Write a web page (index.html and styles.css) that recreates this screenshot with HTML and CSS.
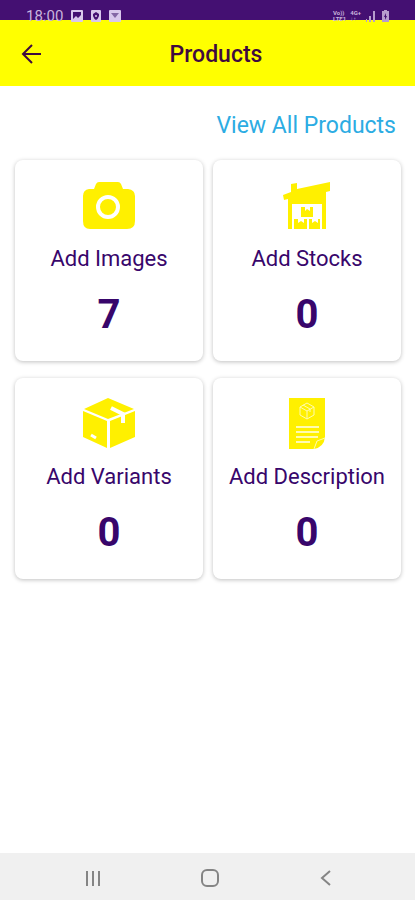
FILE: index.html
```html
<!DOCTYPE html>
<html lang="en">

<head>
    <meta charset="UTF-8">
    <meta name="viewport" content="width=device-width, initial-scale=1.0">
    <title>Products</title>
    <link rel="stylesheet" href="styles.css">
</head>

<body>
    <div class="status-bar">
        <span class="time">18:00</span>
        <svg width="50" height="12" viewBox="0 0 50 12" aria-hidden="true">
            <path fill="#d9c8ec" fill-rule="evenodd" d="M1 0h10q1 0 1 1v10q0 1-1 1H1q-1 0-1-1V1q0-1 1-1zM2 2v7l3-3 2 2 3-3V2z" />
            <path fill="#d9c8ec" fill-rule="evenodd" d="M21 0h8q1 0 1 1v10q0 1-1 1h-8q-1 0-1-1V1q0-1 1-1zM25 2l-3 2v2q1 3 3 4 2-1 3-4V4z" />
            <circle cx="25" cy="6" r="1" fill="#d9c8ec" />
            <rect x="38" width="12" height="12" rx="1" fill="#d9c8ec" />
            <path d="M40 3h8l-4 5z" fill="#8467a5" />
        </svg>
        <div class="signal">
            <span class="volte">Vo))<br>LTE1</span>
            <span class="volte">4G+<br>↓↑</span>
            <svg width="26" height="12" viewBox="0 0 26 12" fill="#b79dce" aria-hidden="true">
                <path d="M1 9h1v3H1zM4 6h2v6H4zM8 1h2v11H8z" />
                <path d="M17 1h2V0h3v1h2v11h-7z" />
                <path d="M21 3l-2 4h1v3l2-4h-1z" fill="#441072" />
            </svg>
        </div>
    </div>

    <header class="header">
        <button class="back" type="button" aria-label="Back">
            <svg width="22" height="22" viewBox="0 0 22 22" aria-hidden="true">
                <path d="M20 11H3M11 2l-9 9 9 9" fill="none" stroke="#3f0a3f" stroke-width="2" />
            </svg>
        </button>
        <h1>Products</h1>
    </header>

    <main class="content">
        <a class="view-all" href="#">View All Products</a>

        <div class="cards">
            <a class="card" href="#">
                <svg width="54" height="54" viewBox="0 0 54 54" aria-hidden="true">
                    <path fill="#fff000" d="M14 4q1-2 3-2h19q2 0 3 2l2 5h5q7 1 7 7v25q0 8-8 8H8q-7 0-7-8V16q0-6 6-7h5z" />
                    <circle cx="26" cy="27" r="10" fill="#fff000" stroke="#fff" stroke-width="4" />
                </svg>
                <h2>Add Images</h2>
                <p>7</p>
            </a>
            <a class="card" href="#">
                <svg width="54" height="54" viewBox="0 0 54 54" aria-hidden="true">
                    <path fill="#fff000" fill-rule="evenodd" d="M3 15l8-3V4l6-1v6L50 2v9l-4 1v37H8V19l-4 1zM12 24v25h30V24z" />
                    <path fill="#fff000" d="M21 27h4v4l2-2 3 2v-4h3v10H21zM14 39h4v4l3-2 3 2v-4h3v10H14zM29 39h3v4l3-2 3 2v-4h2v10H29z" />
                </svg>
                <h2>Add Stocks</h2>
                <p>0</p>
            </a>
            <a class="card" href="#">
                <svg width="54" height="54" viewBox="0 1 54 54" aria-hidden="true">
                    <path fill="#fff000" d="M26 1L2 12l24 10 26-10zM1 14v26l24 11V24zM28 24v27l25-11V14z" />
                    <path d="M29 11l12 6v9" fill="none" stroke="#fff" stroke-width="4" />
                    <path d="M9 38l5 3" stroke="#fff" stroke-width="3" />
                </svg>
                <h2>Add Variants</h2>
                <p>0</p>
            </a>
            <a class="card" href="#">
                <svg width="54" height="54" viewBox="0 1 54 54" aria-hidden="true">
                    <path fill="#fff000" d="M9 1h36v39q-1 10-11 12H9z" />
                    <g fill="none" stroke="#fffbb0">
                        <path d="M27 6l7 4v8l-7 4-7-4v-8zM20 10l7 4 7-4M27 14v8M23 8l7 4v3" />
                        <path stroke-width="2" d="M16 30h23M16 35h23M16 40h22M16 45h14" />
                        <path d="M34 52l3-8 8-3" />
                    </g>
                </svg>
                <h2>Add Description</h2>
                <p>0</p>
            </a>
        </div>
    </main>

    <nav class="nav-bar">
        <button type="button" aria-label="Recent apps">
            <svg width="20" height="20" viewBox="0 0 20 20" aria-hidden="true">
                <path d="M4 3v15M10 3v15M16 3v15" stroke="#858585" stroke-width="2" />
            </svg>
        </button>
        <button type="button" aria-label="Home">
            <svg width="20" height="20" viewBox="0 0 20 20" aria-hidden="true">
                <rect x="2" y="2" width="16" height="16" rx="5" fill="none" stroke="#858585" stroke-width="2" />
            </svg>
        </button>
        <button type="button" aria-label="Back">
            <svg width="20" height="20" viewBox="0 0 20 20" aria-hidden="true">
                <path d="M14 3l-8 7 8 7" fill="none" stroke="#858585" stroke-width="2" />
            </svg>
        </button>
    </nav>
</body>

</html>
```

FILE: styles.css
```css
* {
    box-sizing: border-box;
}

body {
    margin: 0;
    min-height: 100vh;
    display: flex;
    flex-direction: column;
    font-family: Roboto, sans-serif;
    background-color: #fff;
    color: #38066b;
}

h1,
h2,
p {
    margin: 0;
}

button {
    display: flex;
    padding: 0;
    border: none;
    background: none;
    cursor: pointer;
}

/* the icons hang slightly over the header */
.status-bar {
    position: relative;
    z-index: 1;
    display: flex;
    align-items: flex-start;
    gap: 8px;
    height: 20px;
    padding: 10px 24px 0 26px;
    background-color: #441072;
    color: #c9b4dd;
}

.time {
    font-size: 15px;
    line-height: 12px;
}

.signal {
    display: flex;
    gap: 4px;
    margin-left: auto;
}

.volte {
    font-size: 6px;
    font-weight: 700;
    line-height: 6px;
}

.header {
    display: grid;
    grid-template-columns: 56px 1fr 40px;
    align-items: center;
    height: 66px;
    padding: 2px 20px 0 21px;
    background-color: #ff0;
}

.header h1 {
    font-size: 23px;
    font-weight: 500;
    text-align: center;
    color: #3f0a3f;
}

.content {
    flex: 1;
    display: flex;
    flex-direction: column;
    padding: 25px 14px 24px 15px;
}

.view-all {
    align-self: flex-end;
    margin: 0 5px 19px 0;
    font-size: 23px;
    line-height: 30px;
    color: #2cace3;
    text-decoration: none;
}

.cards {
    display: grid;
    grid-template-columns: 1fr 1fr;
    gap: 17px 10px;
}

.card {
    display: flex;
    flex-direction: column;
    align-items: center;
    height: 201px;
    padding-top: 20px;
    border-radius: 8px;
    background-color: #fff;
    box-shadow: 0 1px 4px rgba(0, 0, 0, 0.25);
    color: #38066b;
    text-decoration: none;
}

.card h2 {
    margin-top: 11px;
    font-size: 22px;
    font-weight: 400;
    line-height: 28px;
    white-space: nowrap;
}

.card p {
    margin-top: 18px;
    font-size: 40px;
    font-weight: 700;
    line-height: 48px;
}

.nav-bar {
    display: flex;
    justify-content: space-between;
    align-items: center;
    height: 47px;
    padding: 2px 79px 0 83px;
    background-color: #f0f0f0;
}
```
